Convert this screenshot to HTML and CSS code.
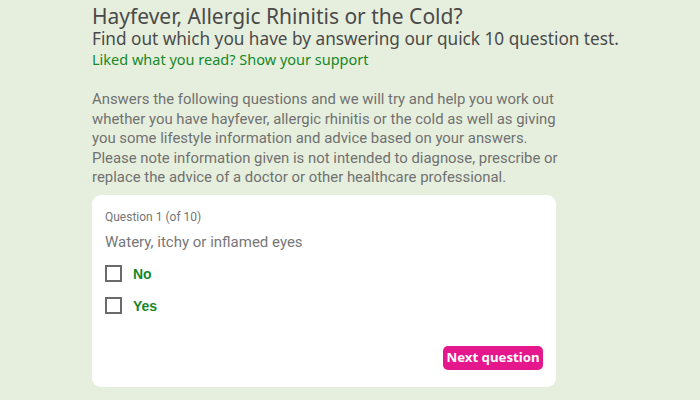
FILE: index.html
```html
<!DOCTYPE html>
<html>
<head>
<meta charset="utf-8">
<link rel="stylesheet" href="styles.css">
</head>
<body>
<main class="page">
  <header class="intro">
    <h1 class="title">Hayfever, Allergic Rhinitis or the Cold?</h1>
    <h2 class="subtitle">Find out which you have by answering our quick 10 question test.</h2>
    <a class="support" href="#">Liked what you read? Show your support</a>
  </header>
  <p class="lead">Answers the following questions and we will try and help you work out<br>whether you have hayfever, allergic rhinitis or the cold as well as giving<br>you some lifestyle information and advice based on your answers.<br>Please note information given is not intended to diagnose, prescribe or<br>replace the advice of a doctor or other healthcare professional.</p>
  <section class="card">
    <div class="qnum">Question 1 (of 10)</div>
    <div class="qtext">Watery, itchy or inflamed eyes</div>
    <label class="option"><span class="box"></span><span class="opt-label">No</span></label>
    <label class="option"><span class="box"></span><span class="opt-label">Yes</span></label>
    <div class="actions"><button class="next">Next question</button></div>
  </section>
</main>
</body>
</html>
```

FILE: styles.css
```css
html, body {
  margin: 0;
  padding: 0;
  background: #e6efdd;
}
.page {
  width: 464px;
  margin-left: 92px;
  padding-top: 4px;
}
.intro {
  display: flex;
  flex-direction: column;
  align-items: flex-start;
}
.title {
  margin: 0;
  font-family: "Noto Sans", sans-serif;
  font-weight: 400;
  font-size: 21px;
  line-height: 24px;
  color: #4a4a4a;
  white-space: nowrap;
}
.subtitle {
  margin: 1px 0 0;
  font-family: "Noto Sans", sans-serif;
  font-weight: 400;
  font-size: 17.2px;
  line-height: 19px;
  color: #4a4a4a;
  white-space: nowrap;
}
.support {
  margin-top: 1px;
  font-family: "Noto Sans", sans-serif;
  font-size: 14.5px;
  line-height: 20px;
  color: #16882a;
  text-decoration: none;
}
.lead {
  margin: 21px 0 0;
  font-family: "Roboto", sans-serif;
  font-size: 14.9px;
  line-height: 19.5px;
  color: #717171;
  white-space: nowrap;
}
.card {
  margin-top: 7px;
  background: #fff;
  border-radius: 9px;
  padding: 14px 13px 17px 13px;
  height: 161px;
  display: flex;
  flex-direction: column;
  align-items: flex-start;
}
.qnum {
  font-family: "Roboto", sans-serif;
  font-size: 12px;
  line-height: 16px;
  color: #757575;
}
.qtext {
  margin-top: 8px;
  font-family: "Roboto", sans-serif;
  font-size: 15px;
  line-height: 18px;
  color: #777;
}
.option {
  display: flex;
  align-items: center;
  margin-top: 14px;
  height: 18px;
}
.box {
  width: 13px;
  height: 13px;
  border: 2px solid #6a6a6a;
}
.opt-label {
  margin-left: 11px;
  font-family: "Liberation Sans", Arial, sans-serif;
  font-weight: 700;
  font-size: 14px;
  color: #16882a;
}
.actions {
  margin-top: auto;
  align-self: stretch;
  display: flex;
  justify-content: flex-end;
}
.next {
  border: none;
  background: #e5178d;
  color: #fff;
  font-family: "Noto Sans", sans-serif;
  font-weight: 700;
  font-size: 13.2px;
  line-height: 17px;
  padding: 0;
  border-radius: 5px;
  height: 24px;
  width: 100px;
  white-space: nowrap;
  text-align: center;
}
```
